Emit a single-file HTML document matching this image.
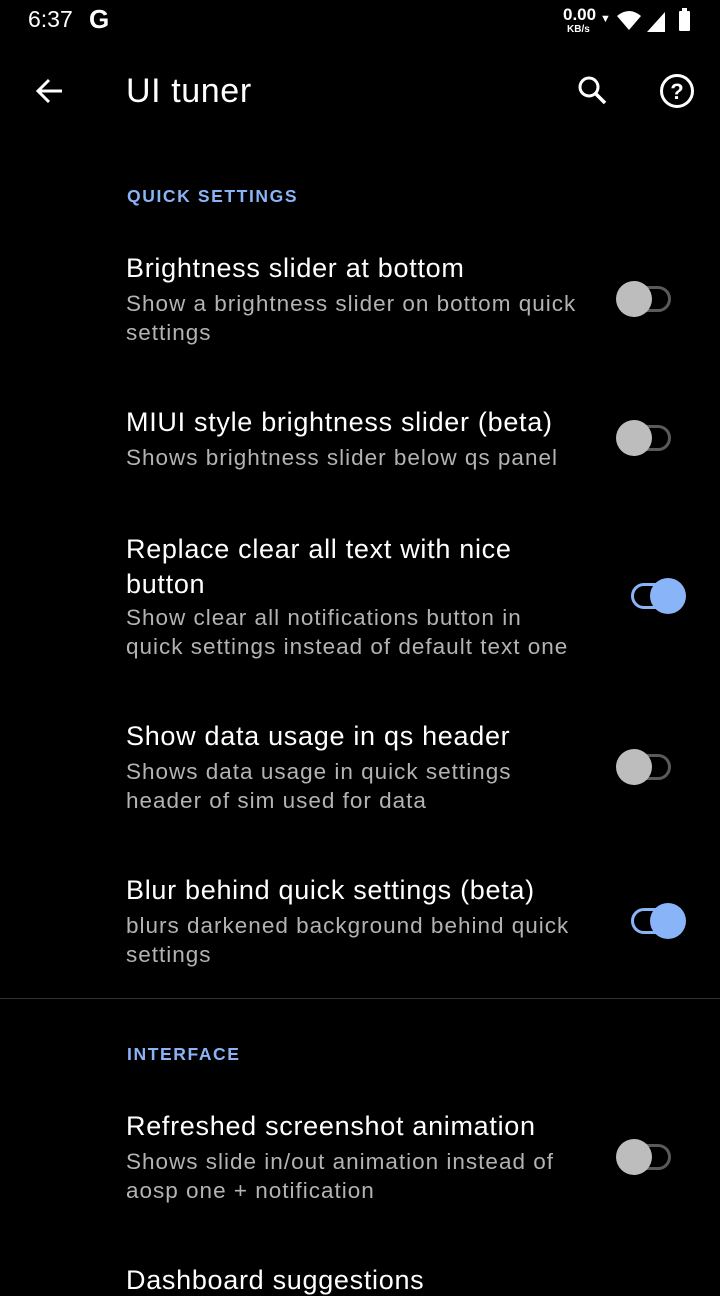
<!DOCTYPE html><html><head><style>
body{margin:0;width:720px;height:1280px;background:#000;overflow:hidden;font-family:"Liberation Sans",sans-serif;color:#fff;position:relative}
.a{position:absolute}
.t{position:absolute;left:126px;font-size:27px;letter-spacing:0.7px;color:#fff;white-space:nowrap}
.s{position:absolute;left:126px;font-size:22.5px;letter-spacing:1px;color:#b3b3b3;line-height:29px;white-space:nowrap}
.h{position:absolute;left:127px;font-size:17.5px;color:#8ab4f8;letter-spacing:1.6px;font-weight:bold}
.off .tr{position:absolute;left:618px;width:47px;height:20px;border:3px solid #5a5a5a;border-radius:13px}
.off .th{position:absolute;left:616px;width:36px;height:36px;border-radius:50%;background:#bdbdbd}
.on .tr{position:absolute;left:631px;width:48px;height:20px;border:3px solid #8ab4f8;border-radius:13px}
.on .th{position:absolute;left:650px;width:36px;height:36px;border-radius:50%;background:#8ab4f8}
</style></head><body>
<div class="a" style="left:28px;top:6px;font-size:23px">6:37</div>
<div class="a" style="left:89px;top:4px;font-size:26px;font-weight:bold">G</div>
<div class="a" style="left:563px;top:7px;font-size:17px;font-weight:bold;line-height:16px">0.00</div>
<div class="a" style="left:567px;top:24px;font-size:10px;font-weight:bold">KB/s</div>
<div class="a" style="left:600px;top:13px;font-size:11px">▼</div>
<svg class="a" style="left:615px;top:8px" width="80" height="26"><path d="M2 8 Q14 -2 26 8 L14 22Z" fill="#fff"/><path d="M32 24 L50 4 L50 24Z" fill="#fff"/><rect x="64" y="3" width="11" height="20" rx="1" fill="#fff"/><rect x="67" y="0" width="5" height="4" fill="#fff"/></svg>
<svg class="a" style="left:34px;top:77px" width="30" height="30"><path d="M28 14H4M15 3L4 14l11 11" stroke="#fff" stroke-width="3" fill="none"/></svg>
<div class="a" style="left:126px;top:72px;font-size:34px;letter-spacing:0.6px">UI tuner</div>
<svg class="a" style="left:576px;top:74px" width="34" height="34"><circle cx="13" cy="13" r="9" stroke="#fff" stroke-width="3" fill="none"/><path d="M19 19l10 10" stroke="#fff" stroke-width="3.5"/></svg>
<svg class="a" style="left:658px;top:72px" width="38" height="38"><circle cx="19" cy="19" r="15.5" stroke="#fff" stroke-width="3" fill="none"/><text x="19" y="27" font-size="22" font-family="Liberation Sans" fill="#fff" text-anchor="middle" font-weight="bold">?</text></svg>
<div class="h" style="top:186px">QUICK SETTINGS</div>
<div class="t" style="top:253px">Brightness slider at bottom</div>
<div class="s" style="top:289px">Show a brightness slider on bottom quick<br>settings</div>
<div class="off"><div class="tr" style="top:286px"></div><div class="th" style="top:281px"></div></div>
<div class="t" style="top:407px">MIUI style brightness slider (beta)</div>
<div class="s" style="top:443px">Shows brightness slider below qs panel</div>
<div class="off"><div class="tr" style="top:425px"></div><div class="th" style="top:420px"></div></div>
<div class="t" style="top:532px;line-height:35px">Replace clear all text with nice<br>button</div>
<div class="s" style="top:603px">Show clear all notifications button in<br>quick settings instead of default text one</div>
<div class="on"><div class="tr" style="top:583px"></div><div class="th" style="top:578px"></div></div>
<div class="t" style="top:721px">Show data usage in qs header</div>
<div class="s" style="top:757px">Shows data usage in quick settings<br>header of sim used for data</div>
<div class="off"><div class="tr" style="top:754px"></div><div class="th" style="top:749px"></div></div>
<div class="t" style="top:875px">Blur behind quick settings (beta)</div>
<div class="s" style="top:911px">blurs darkened background behind quick<br>settings</div>
<div class="on"><div class="tr" style="top:908px"></div><div class="th" style="top:903px"></div></div>
<div class="a" style="left:0;top:998px;width:720px;height:1px;background:#333"></div>
<div class="h" style="top:1044px">INTERFACE</div>
<div class="t" style="top:1111px">Refreshed screenshot animation</div>
<div class="s" style="top:1147px">Shows slide in/out animation instead of<br>aosp one + notification</div>
<div class="off"><div class="tr" style="top:1144px"></div><div class="th" style="top:1139px"></div></div>
<div class="t" style="top:1265px">Dashboard suggestions</div>
</body></html>
